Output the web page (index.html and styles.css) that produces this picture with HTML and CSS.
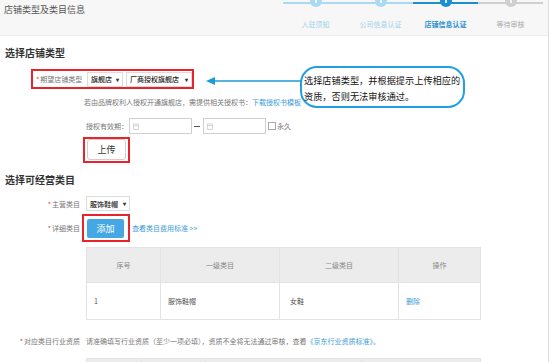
FILE: index.html
```html
<!DOCTYPE html>
<html lang="zh-CN">
<head>
  <meta charset="UTF-8">
  <title>店铺类型及类目信息</title>
  <link rel="stylesheet" href="styles.css">
</head>
<body>
  <div class="page">
    <div class="top">
      <h2 class="top-title">店铺类型及类目信息</h2>
      <ol class="steps">
        <li class="step done"><span class="dot"></span>入驻须知</li>
        <li class="step done"><span class="dot"></span>公司信息认证</li>
        <li class="step active"><span class="dot"></span>店铺信息认证</li>
        <li class="step"><span class="dot"></span>等待审核</li>
      </ol>
    </div>

    <h3 class="sec-title">选择店铺类型</h3>

    <div class="type-row">
      <div class="mark-box type-box">
        <span class="label"><i class="req">*</i>期望店铺类型</span>
        <span class="select sel-a">旗舰店 <b class="caret">▾</b></span>
        <span class="select sel-b">厂商授权旗舰店 <b class="caret">▾</b></span>
      </div>
    </div>

    <p class="notice">若由品牌权利人授权开通旗舰店，需提供相关授权书：<a class="link">下载授权书模板</a></p>

    <div class="date-row">
      <span>授权有效期：</span>
      <span class="date-input">
        <svg width="6" height="7" viewBox="0 0 6 7"><rect x="0.5" y="1" width="5" height="5.5" fill="none" stroke="#ccc" stroke-width="0.8"/><line x1="0.5" y1="2.6" x2="5.5" y2="2.6" stroke="#ccc" stroke-width="0.8"/></svg>
      </span>
      <span class="dash"></span>
      <span class="date-input">
        <svg width="6" height="7" viewBox="0 0 6 7"><rect x="0.5" y="1" width="5" height="5.5" fill="none" stroke="#ccc" stroke-width="0.8"/><line x1="0.5" y1="2.6" x2="5.5" y2="2.6" stroke="#ccc" stroke-width="0.8"/></svg>
      </span>
      <span class="check"></span>
      <span>永久</span>
    </div>

    <div class="mark-box upload-box">
      <button class="btn-upload">上传</button>
    </div>

    <h3 class="sec-title sec-two">选择可经营类目</h3>

    <div class="form-row main-row">
      <span class="label col"><i class="req">*</i>主营类目</span>
      <span class="select sel-c">服饰鞋帽 <b class="caret">▾</b></span>
    </div>

    <div class="form-row detail-row">
      <span class="label col"><i class="req">*</i>详细类目</span>
      <div class="mark-box add-box">
        <button class="btn-add">添加</button>
      </div>
      <a class="link more">查看类目费用标准 &gt;&gt;</a>
    </div>

    <table class="grid grid-one">
      <tr>
        <th class="c1">序号</th>
        <th class="c2">一级类目</th>
        <th class="c3">二级类目</th>
        <th class="c4">操作</th>
      </tr>
      <tr>
        <td>1</td>
        <td>服饰鞋帽</td>
        <td class="pad">女鞋</td>
        <td><a class="link">删除</a></td>
      </tr>
    </table>

    <div class="form-row qual-row">
      <span class="label col"><i class="req">*</i>对应类目行业资质</span>
      <span class="qual-text">请准确填写行业资质（至少一项必填），资质不全将无法通过审核，查看<a class="link">《京东行业资质标准》</a>。</span>
    </div>

    <table class="grid grid-two">
      <tr>
        <th class="d1"></th>
        <th class="d2"></th>
        <th class="d3"></th>
        <th class="d4"></th>
      </tr>
    </table>

    <!-- annotation over the form -->
    <svg class="arrow" width="96" height="10" viewBox="0 0 96 10">
      <line x1="7" y1="5" x2="96" y2="5" stroke="#1c9ad9" stroke-width="1.6"/>
      <polygon points="0,5 9,1 9,9" fill="#1c9ad9"/>
    </svg>
    <div class="callout">选择店铺类型，并根据提示上传相应的<br>资质，否则无法审核通过。</div>
  </div>
</body>
</html>
```

FILE: styles.css
```css
body {
  margin: 0;
  background: #fff;
  font-family: "Noto Sans CJK SC", "Noto Sans", sans-serif;
  font-size: 7px;
  color: #777;
}

.page {
  position: relative;
  width: 548px;
  height: 362px;
  overflow: hidden;
  border-right: 1px solid #dcdcdc;
}

.top {
  height: 35px;
  background: #f7f7f7;
  border-bottom: 1px solid #ececec;
  display: flex;
  justify-content: space-between;
}

.top-title {
  margin: 0;
  padding: 3px 0 0 4px;
  font-size: 9px;
  line-height: 14px;
  font-weight: normal;
  color: #555;
}

.steps {
  list-style: none;
  margin: 2px 5px 0 0;
  padding: 0;
  display: flex;
}

.step {
  position: relative;
  width: 65px;
  border-top: 2px solid #cfcfcf;
  padding-top: 15px;
  text-align: center;
  line-height: 10px;
  color: #aaa;
}

.step .dot {
  position: absolute;
  top: -9px;
  left: 50%;
  margin-left: -6px;
  width: 12px;
  height: 12px;
  border-radius: 50%;
  background: #cfcfcf;
}

.step .dot::after {
  content: "";
  position: absolute;
  left: 5px;
  top: 4px;
  width: 2px;
  height: 4px;
  background: rgba(255, 255, 255, 0.8);
}

.step.done {
  border-top-color: #a9d9f3;
  color: #9fd0ea;
}

.step.done .dot {
  background: #a9d9f3;
}

.step.active {
  border-top-color: #1d8fd1;
  color: #2a8fcf;
  font-weight: bold;
}

.step.active .dot {
  background: #1d8fd1;
}

.sec-title {
  margin: 0;
  padding: 10px 0 0 5px;
  font-size: 10px;
  line-height: 14px;
  font-weight: bold;
  color: #333;
}

.sec-two {
  padding-top: 10px;
}

.req {
  font-style: normal;
  color: #e4393c;
  margin-right: 1px;
}

.mark-box {
  border: 2px solid #e8232b;
  box-sizing: border-box;
}

.type-row {
  margin: 9px 0 0 31px;
  display: flex;
}

.type-box {
  display: flex;
  align-items: center;
  height: 20px;
  padding: 0 0 0 3px;
}

.type-box .label {
  width: 48px;
  margin-right: 3px;
}

.select {
  display: flex;
  align-items: center;
  justify-content: space-between;
  box-sizing: border-box;
  height: 15px;
  padding: 0 3px 0 3px;
  border: 1px solid #dcdcdc;
  background: #fff;
  color: #222;
  font-weight: 500;
  font-size: 7px;
}

.caret {
  font-size: 6px;
  color: #333;
}

.sel-a {
  width: 36px;
  margin-right: 3px;
}

.sel-b {
  width: 66px;
}

.notice {
  margin: 7px 0 0 84px;
  line-height: 12px;
}

.link {
  color: #3a9bd5;
}

.date-row {
  display: flex;
  align-items: center;
  margin: 10px 0 0 86px;
  height: 16px;
}

.date-input {
  display: flex;
  align-items: center;
  box-sizing: border-box;
  width: 63px;
  height: 16px;
  margin-left: 1px;
  padding-left: 3px;
  border: 1px solid #d0d0d0;
}

.dash {
  width: 6px;
  height: 1px;
  margin: 0 2px;
  background: #555;
}

.check {
  width: 6px;
  height: 6px;
  margin: 0 1px 0 2px;
  border: 1px solid #aaa;
}

.upload-box {
  width: 47px;
  height: 26px;
  margin: 3px 0 0 83px;
  padding: 0 0 0 2px;
}

.btn-upload {
  display: block;
  width: 39px;
  height: 21px;
  padding: 0;
  border: 1px solid #cfcfcf;
  border-radius: 3px;
  background: #fff;
  font-family: inherit;
  font-size: 9px;
  color: #333;
}

.form-row {
  display: flex;
  align-items: center;
}

.col {
  width: 80px;
  text-align: right;
  flex-shrink: 0;
}

.main-row {
  margin-top: 9px;
}

.sel-c {
  width: 44px;
  margin-left: 6px;
}

.detail-row {
  margin-top: 3px;
}

.add-box {
  width: 48px;
  height: 28px;
  margin-left: 2px;
  padding: 3px 0 0 3px;
}

.btn-add {
  display: block;
  width: 37px;
  height: 19px;
  padding: 0;
  border: none;
  border-radius: 2px;
  background: #45a8e4;
  color: #fff;
  font-family: inherit;
  font-size: 9px;
}

.more {
  margin-left: 2px;
}

.grid {
  border-collapse: collapse;
  margin-left: 86px;
  table-layout: fixed;
  width: 390px;
}

.grid th,
.grid td {
  border: 1px solid #e3e3e3;
  padding: 0;
  font-weight: normal;
}

.grid th {
  height: 34px;
  background: #ececec;
  color: #888;
  text-align: center;
}

.grid td {
  height: 36px;
  color: #555;
  padding-left: 7px;
}

.grid td.pad {
  padding-left: 10px;
}

.grid-one {
  margin-top: 5px;
}

.c1 { width: 73px; }
.c2 { width: 118px; }
.c3 { width: 118px; }
.c4 { width: 81px; }

.qual-row {
  margin-top: 15px;
  line-height: 12px;
}

.qual-text {
  margin-left: 6px;
}

.grid-two {
  margin-top: 11px;
}

.d1 { width: 54px; }
.d2 { width: 63px; }
.d3 { width: 155px; }
.d4 { width: 118px; }

.arrow {
  position: absolute;
  left: 206px;
  top: 76px;
}

.callout {
  position: absolute;
  left: 300px;
  top: 66px;
  width: 165px;
  height: 42px;
  box-sizing: border-box;
  padding: 4px 0 0 2px;
  border: 2px solid #20a0e0;
  border-radius: 17px;
  background: #fff;
  color: #111;
  font-size: 9.2px;
  line-height: 16px;
}
```
